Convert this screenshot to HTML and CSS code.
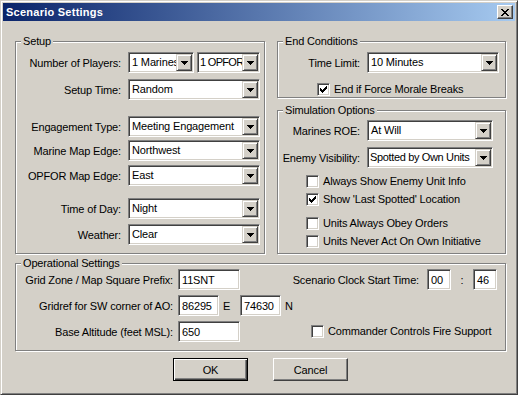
FILE: index.html
```html
<!DOCTYPE html>
<html>
<head>
<meta charset="utf-8">
<title>Scenario Settings</title>
<link rel="stylesheet" href="styles.css">
</head>
<body>
<div class="window">
  <div class="titlebar">
    <span class="title">Scenario Settings</span>
    <div class="close">
      <svg width="8" height="7" viewBox="0 0 8 7" shape-rendering="crispEdges"><path d="M0 0h2v1H0z M6 0h2v1H6z M1 1h2v1H1z M5 1h2v1H5z M2 2h4v1H2z M3 3h2v1H3z M2 4h4v1H2z M1 5h2v1H1z M5 5h2v1H5z M0 6h2v1H0z M6 6h2v1H6z" fill="#000"/></svg>
    </div>
  </div>
  <div class="client">
    <div class="top-row">
      <section class="group setup">
        <div class="legend">Setup</div>
        <div class="row mt10">
          <span class="lbl">Number of Players:</span>
          <div class="combo w66"><span class="val">1 Marines</span><span class="dd"><svg width="7" height="4" viewBox="0 0 7 4" shape-rendering="crispEdges"><path d="M0 0h7v1H0z M1 1h5v1H1z M2 2h3v1H2z M3 3h1v1H3z"/></svg></span></div>
          <div class="combo w63 ml3"><span class="val tight">1 OPFOR</span><span class="dd"><svg width="7" height="4" viewBox="0 0 7 4" shape-rendering="crispEdges"><path d="M0 0h7v1H0z M1 1h5v1H1z M2 2h3v1H2z M3 3h1v1H3z"/></svg></span></div>
        </div>
        <div class="row mt6">
          <span class="lbl">Setup Time:</span>
          <div class="combo w132"><span class="val">Random</span><span class="dd"><svg width="7" height="4" viewBox="0 0 7 4" shape-rendering="crispEdges"><path d="M0 0h7v1H0z M1 1h5v1H1z M2 2h3v1H2z M3 3h1v1H3z"/></svg></span></div>
        </div>
        <div class="row mt16">
          <span class="lbl">Engagement Type:</span>
          <div class="combo w132"><span class="val">Meeting Engagement</span><span class="dd"><svg width="7" height="4" viewBox="0 0 7 4" shape-rendering="crispEdges"><path d="M0 0h7v1H0z M1 1h5v1H1z M2 2h3v1H2z M3 3h1v1H3z"/></svg></span></div>
        </div>
        <div class="row mt3">
          <span class="lbl">Marine Map Edge:</span>
          <div class="combo w132"><span class="val">Northwest</span><span class="dd"><svg width="7" height="4" viewBox="0 0 7 4" shape-rendering="crispEdges"><path d="M0 0h7v1H0z M1 1h5v1H1z M2 2h3v1H2z M3 3h1v1H3z"/></svg></span></div>
        </div>
        <div class="row mt4">
          <span class="lbl">OPFOR Map Edge:</span>
          <div class="combo w132"><span class="val">East</span><span class="dd"><svg width="7" height="4" viewBox="0 0 7 4" shape-rendering="crispEdges"><path d="M0 0h7v1H0z M1 1h5v1H1z M2 2h3v1H2z M3 3h1v1H3z"/></svg></span></div>
        </div>
        <div class="row mt12">
          <span class="lbl">Time of Day:</span>
          <div class="combo w132"><span class="val">Night</span><span class="dd"><svg width="7" height="4" viewBox="0 0 7 4" shape-rendering="crispEdges"><path d="M0 0h7v1H0z M1 1h5v1H1z M2 2h3v1H2z M3 3h1v1H3z"/></svg></span></div>
        </div>
        <div class="row mt5">
          <span class="lbl">Weather:</span>
          <div class="combo w132"><span class="val">Clear</span><span class="dd"><svg width="7" height="4" viewBox="0 0 7 4" shape-rendering="crispEdges"><path d="M0 0h7v1H0z M1 1h5v1H1z M2 2h3v1H2z M3 3h1v1H3z"/></svg></span></div>
        </div>
      </section>

      <div class="right-col">
        <section class="group endcond">
          <div class="legend">End Conditions</div>
          <div class="row mt10">
            <span class="lbl">Time Limit:</span>
            <div class="combo w132"><span class="val">10 Minutes</span><span class="dd"><svg width="7" height="4" viewBox="0 0 7 4" shape-rendering="crispEdges"><path d="M0 0h7v1H0z M1 1h5v1H1z M2 2h3v1H2z M3 3h1v1H3z"/></svg></span></div>
          </div>
          <div class="check-row mt10 indent39">
            <span class="cb"><svg width="7" height="7" viewBox="0 0 7 7" shape-rendering="crispEdges"><polygon points="0,2 1,2 1,3 2,3 2,4 3,4 3,3 4,3 4,2 5,2 5,1 6,1 6,0 7,0 7,3 6,3 6,4 5,4 5,5 4,5 4,6 3,6 3,7 2,7 2,6 1,6 1,5 0,5"/></svg></span>
            <span class="cb-text">End if Force Morale Breaks</span>
          </div>
        </section>

        <section class="group sim">
          <div class="legend">Simulation Options</div>
          <div class="row mt9">
            <span class="lbl">Marines ROE:</span>
            <div class="combo w126"><span class="val">At Will</span><span class="dd"><svg width="7" height="4" viewBox="0 0 7 4" shape-rendering="crispEdges"><path d="M0 0h7v1H0z M1 1h5v1H1z M2 2h3v1H2z M3 3h1v1H3z"/></svg></span></div>
          </div>
          <div class="row mt6">
            <span class="lbl">Enemy Visibility:</span>
            <div class="combo w126"><span class="val snug">Spotted by Own Units</span><span class="dd"><svg width="7" height="4" viewBox="0 0 7 4" shape-rendering="crispEdges"><path d="M0 0h7v1H0z M1 1h5v1H1z M2 2h3v1H2z M3 3h1v1H3z"/></svg></span></div>
          </div>
          <div class="check-row mt7 indent28">
            <span class="cb"></span>
            <span class="cb-text">Always Show Enemy Unit Info</span>
          </div>
          <div class="check-row mt5 indent28">
            <span class="cb"><svg width="7" height="7" viewBox="0 0 7 7" shape-rendering="crispEdges"><polygon points="0,2 1,2 1,3 2,3 2,4 3,4 3,3 4,3 4,2 5,2 5,1 6,1 6,0 7,0 7,3 6,3 6,4 5,4 5,5 4,5 4,6 3,6 3,7 2,7 2,6 1,6 1,5 0,5"/></svg></span>
            <span class="cb-text">Show 'Last Spotted' Location</span>
          </div>
          <div class="check-row mt11 indent28">
            <span class="cb"></span>
            <span class="cb-text">Units Always Obey Orders</span>
          </div>
          <div class="check-row mt5 indent28">
            <span class="cb"></span>
            <span class="cb-text">Units Never Act On Own Initiative</span>
          </div>
        </section>
      </div>
    </div>

    <section class="group ops">
      <div class="legend">Operational Settings</div>
      <div class="row mt5">
        <span class="lbl">Grid Zone / Map Square Prefix:</span>
        <span class="tb w62">11SNT</span>
        <span class="spacer"></span>
        <span class="clock-lbl">Scenario Clock Start Time:</span>
        <span class="tb w24">00</span>
        <span class="colon">:</span>
        <span class="tb w24">46</span>
      </div>
      <div class="row mt5">
        <span class="lbl">Gridref for SW corner of AO:</span>
        <span class="tb w41">86295</span>
        <span class="axis">E</span>
        <span class="tb w41 ml9">74630</span>
        <span class="axis">N</span>
      </div>
      <div class="row mt5">
        <span class="lbl">Base Altitude (feet MSL):</span>
        <span class="tb w62">650</span>
        <span class="check-inline">
          <span class="cb"></span>
          <span class="cb-text">Commander Controls Fire Support</span>
        </span>
      </div>
    </section>

    <div class="buttons">
      <div class="btn default">OK</div>
      <div class="btn">Cancel</div>
    </div>
  </div>
</div>
</body>
</html>
```

FILE: styles.css
```css
* { box-sizing: border-box; }

html, body {
  margin: 0;
  padding: 0;
  background: #D4D0C8;
}

body {
  font-family: "Liberation Sans", Arial, sans-serif;
  font-size: 11px;
  letter-spacing: -0.15px;
  color: #000;
}

.window {
  width: 518px;
  height: 395px;
  background: #D4D0C8;
  border: 1px solid;
  border-color: #D4D0C8 #404040 #404040 #D4D0C8;
  box-shadow: inset 1px 1px #fff, inset -1px -1px #808080;
  padding: 2px;
  display: flex;
  flex-direction: column;
}

.titlebar {
  height: 18px;
  flex: none;
  background: linear-gradient(to right, #0A246A, #A6CAF0);
  display: flex;
  align-items: center;
  padding: 0 2px;
}

.title {
  flex: 1;
  color: #fff;
  font-weight: bold;
  letter-spacing: 0.25px;
  line-height: 18px;
  padding-left: 1px;
}

.close {
  width: 16px;
  height: 14px;
  background: #D4D0C8;
  border: 1px solid;
  border-color: #fff #404040 #404040 #fff;
  box-shadow: inset -1px -1px #808080;
  display: flex;
  align-items: center;
  justify-content: center;
}

.close svg { display: block; margin-left: -1px; }

.client {
  padding: 20px 9px 0 12px;
}

.top-row {
  display: flex;
  gap: 12px;
}

.group {
  border: 1px solid #808080;
  box-shadow: inset 1px 1px #fff, 1px 1px #fff;
  display: flex;
  flex-direction: column;
}

.legend {
  align-self: flex-start;
  height: 13px;
  line-height: 13px;
  margin: -7px 0 -6px 5px;
  padding: 0 2px;
  background: #D4D0C8;
  white-space: nowrap;
}

.setup { width: 250px; height: 213px; }

.right-col {
  width: 229px;
  display: flex;
  flex-direction: column;
  gap: 12px;
}

.endcond { height: 57px; }
.sim { height: 144px; }

.ops {
  margin-top: 9px;
  height: 88px;
}

.row {
  display: flex;
  align-items: center;
  height: 21px;
  flex: none;
}

.lbl {
  flex: none;
  text-align: right;
  white-space: nowrap;
}

.setup .lbl { width: 105px; margin-right: 7px; }
.endcond .lbl, .sim .lbl { width: 82px; margin-right: 7px; }
.ops .lbl { width: 157px; margin-right: 5px; }
.ops .row { padding-right: 8px; }

/* vertical spacing */
.mt3 { margin-top: 3px; }
.mt4 { margin-top: 4px; }
.mt5 { margin-top: 5px; }
.mt6 { margin-top: 6px; }
.mt7 { margin-top: 7px; }
.mt9 { margin-top: 9px; }
.mt10 { margin-top: 10px; }
.mt11 { margin-top: 11px; }
.mt12 { margin-top: 12px; }
.mt16 { margin-top: 16px; }
.ml3 { margin-left: 3px; }
.ml9 { margin-left: 9px; }
.indent39 { padding-left: 39px; }
.indent28 { padding-left: 28px; }

/* sunken controls */
.combo, .tb, .cb {
  background: #fff;
  border: 1px solid;
  border-color: #808080 #fff #fff #808080;
  box-shadow: inset 1px 1px #404040, inset -1px -1px #D4D0C8;
}

.combo {
  height: 21px;
  padding: 1px;
  display: flex;
  align-items: center;
  flex: none;
}

.w132 { width: 132px; }
.w126 { width: 126px; }
.w66 { width: 66px; }
.w63 { width: 63px; }
.w62 { width: 62px; }
.w41 { width: 41px; }
.w24 { width: 24px; }

.val {
  flex: 1;
  min-width: 0;
  overflow: hidden;
  white-space: nowrap;
  padding-left: 2px;
  line-height: 17px;
}

.val.tight {
  letter-spacing: -0.7px;
  padding-left: 1px;
}

.val.snug {
  letter-spacing: -0.35px;
  padding-left: 1px;
}

.dd {
  flex: none;
  width: 16px;
  height: 17px;
  background: #D4D0C8;
  border: 1px solid;
  border-color: #D4D0C8 #404040 #404040 #D4D0C8;
  box-shadow: inset 1px 1px #fff, inset -1px -1px #808080;
  display: flex;
  align-items: center;
  justify-content: center;
}

.dd svg { display: block; fill: #000; }

.tb {
  height: 21px;
  flex: none;
  padding-left: 3px;
  display: flex;
  align-items: center;
  white-space: nowrap;
}

.spacer { flex: 1; }

.clock-lbl { margin-right: 8px; white-space: nowrap; }

.colon {
  width: 22px;
  text-align: center;
}

.axis {
  margin-left: 4px;
  width: 8px;
}

.check-row {
  display: flex;
  align-items: center;
  height: 13px;
  flex: none;
}

.check-inline {
  display: flex;
  align-items: center;
  margin-left: 71px;
}

.cb {
  width: 13px;
  height: 13px;
  flex: none;
  padding: 2px;
}

.cb svg { display: block; fill: #000; }

.cb-text {
  margin-left: 4px;
  white-space: nowrap;
  line-height: 13px;
}

.buttons {
  display: flex;
  justify-content: center;
  gap: 25px;
  margin-top: 7px;
}

.btn {
  width: 75px;
  height: 23px;
  background: #D4D0C8;
  border: 1px solid;
  border-color: #fff #404040 #404040 #fff;
  box-shadow: inset -1px -1px #808080;
  display: flex;
  align-items: center;
  justify-content: center;
}

.btn.default {
  border-color: #000;
  box-shadow: inset 1px 1px #fff, inset -1px -1px #404040, inset -2px -2px #808080;
}
```
